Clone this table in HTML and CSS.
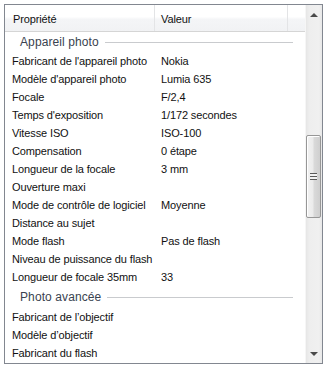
FILE: index.html
```html
<!DOCTYPE html>
<html lang="fr">
<head>
<meta charset="utf-8">
<title>Propriétés — Détails</title>
<link rel="stylesheet" href="styles.css">
</head>
<body>
<div class="panel">
  <div class="list">
    <div class="header">
      <div class="col col-name">Propriété</div>
      <div class="col col-value">Valeur</div>
      <div class="col col-rest"></div>
    </div>
    <div class="body">
      <div class="group first"><span class="group-title">Appareil photo</span><span class="group-line"></span></div>
      <div class="row"><span class="name">Fabricant de l'appareil photo</span><span class="value">Nokia</span></div>
      <div class="row"><span class="name">Modèle d'appareil photo</span><span class="value">Lumia 635</span></div>
      <div class="row"><span class="name">Focale</span><span class="value">F/2,4</span></div>
      <div class="row"><span class="name">Temps d'exposition</span><span class="value">1/172 secondes</span></div>
      <div class="row"><span class="name">Vitesse ISO</span><span class="value">ISO-100</span></div>
      <div class="row"><span class="name">Compensation</span><span class="value">0 étape</span></div>
      <div class="row"><span class="name">Longueur de la focale</span><span class="value">3 mm</span></div>
      <div class="row"><span class="name">Ouverture maxi</span><span class="value"></span></div>
      <div class="row"><span class="name">Mode de contrôle de logiciel</span><span class="value">Moyenne</span></div>
      <div class="row"><span class="name">Distance au sujet</span><span class="value"></span></div>
      <div class="row"><span class="name">Mode flash</span><span class="value">Pas de flash</span></div>
      <div class="row"><span class="name">Niveau de puissance du flash</span><span class="value"></span></div>
      <div class="row"><span class="name">Longueur de focale 35mm</span><span class="value">33</span></div>
      <div class="group"><span class="group-title">Photo avancée</span><span class="group-line"></span></div>
      <div class="row"><span class="name">Fabricant de l’objectif</span><span class="value"></span></div>
      <div class="row"><span class="name">Modèle d’objectif</span><span class="value"></span></div>
      <div class="row"><span class="name">Fabricant du flash</span><span class="value"></span></div>
    </div>
  </div>
  <div class="scrollbar">
    <div class="arrow arrow-up"></div>
    <div class="track">
      <div class="thumb"><span class="grip"></span></div>
    </div>
    <div class="arrow arrow-down"></div>
  </div>
</div>
</body>
</html>
```
FILE: styles.css
```css
html, body {
  margin: 0;
  padding: 0;
  background: #ffffff;
}

body {
  font-family: "Liberation Sans", Arial, sans-serif;
  font-size: 11px;
  letter-spacing: -0.12px;
  color: #111111;
}

.panel {
  margin: 4px 0 0 4px;
  width: 319px;
  height: 360px;
  box-sizing: border-box;
  border: 1px solid #828790;
  display: flex;
  overflow: hidden;
}

.list {
  width: 300px;
  display: flex;
  flex-direction: column;
}

/* column header strip */
.header {
  height: 27px;
  box-sizing: border-box;
  display: flex;
  border-bottom: 1px solid #d5d5d5;
  background: linear-gradient(#ffffff 0%, #ffffff 45%, #f4f5f7 55%, #f1f2f4 100%);
}

.col {
  box-sizing: border-box;
  height: 100%;
  display: flex;
  align-items: center;
  border-right: 1px solid #e3e4e6;
  padding-left: 8px;
  padding-top: 2px;
}

.col-name { width: 150px; }
.col-value { width: 133px; padding-left: 6px; }
.col-rest { flex: 1; border-right: none; }

.body {
  display: flex;
  flex-direction: column;
}

/* group caption with a rule running to the right */
.group {
  height: 22px;
  display: flex;
  align-items: center;
  padding: 0 12px 0 15px;
  gap: 6px;
}

.group.first { height: 20px; }

.group-title {
  font-size: 12px;
  letter-spacing: 0.1px;
  color: #3a4350;
}

.group-line {
  flex: 1;
  height: 1px;
  background: #c9cbce;
}

.row {
  height: 18px;
  display: grid;
  grid-template-columns: 150px 1fr;
  align-items: center;
}

.name {
  padding-left: 7px;
  white-space: nowrap;
}

.value {
  padding-left: 6px;
  white-space: nowrap;
}

/* vertical scrollbar */
.scrollbar {
  width: 17px;
  display: flex;
  flex-direction: column;
  background: linear-gradient(to right, #e6e6e6 0%, #eeeeee 20%, #f0f0f0 80%, #e8e8e8 100%);
  border-left: 1px solid #f6f6f6;
  box-sizing: border-box;
}

.arrow {
  height: 17px;
  display: flex;
  align-items: center;
  justify-content: center;
  flex: none;
}

.arrow::before {
  content: "";
  width: 0;
  height: 0;
  border-left: 4px solid transparent;
  border-right: 4px solid transparent;
}

.arrow-up::before {
  border-bottom: 4px solid #4a4a4a;
  margin-top: 2px;
}

.arrow-down::before {
  border-top: 4px solid #4a4a4a;
  margin-bottom: 2px;
}

.track {
  flex: 1;
  padding-top: 113px;
}

.thumb {
  width: 15px;
  height: 83px;
  box-sizing: border-box;
  border: 1px solid #979797;
  border-radius: 2px;
  background: linear-gradient(to right, #f2f2f2 0%, #ebebeb 45%, #d9d9d9 55%, #cfcfcf 100%);
  box-shadow: inset 1px 1px 0 #ffffff;
  display: flex;
  align-items: center;
  justify-content: center;
}

.grip {
  width: 7px;
  height: 7px;
  background: repeating-linear-gradient(#5a5a5a 0 1px, #f2f2f2 1px 3px);
}
```
